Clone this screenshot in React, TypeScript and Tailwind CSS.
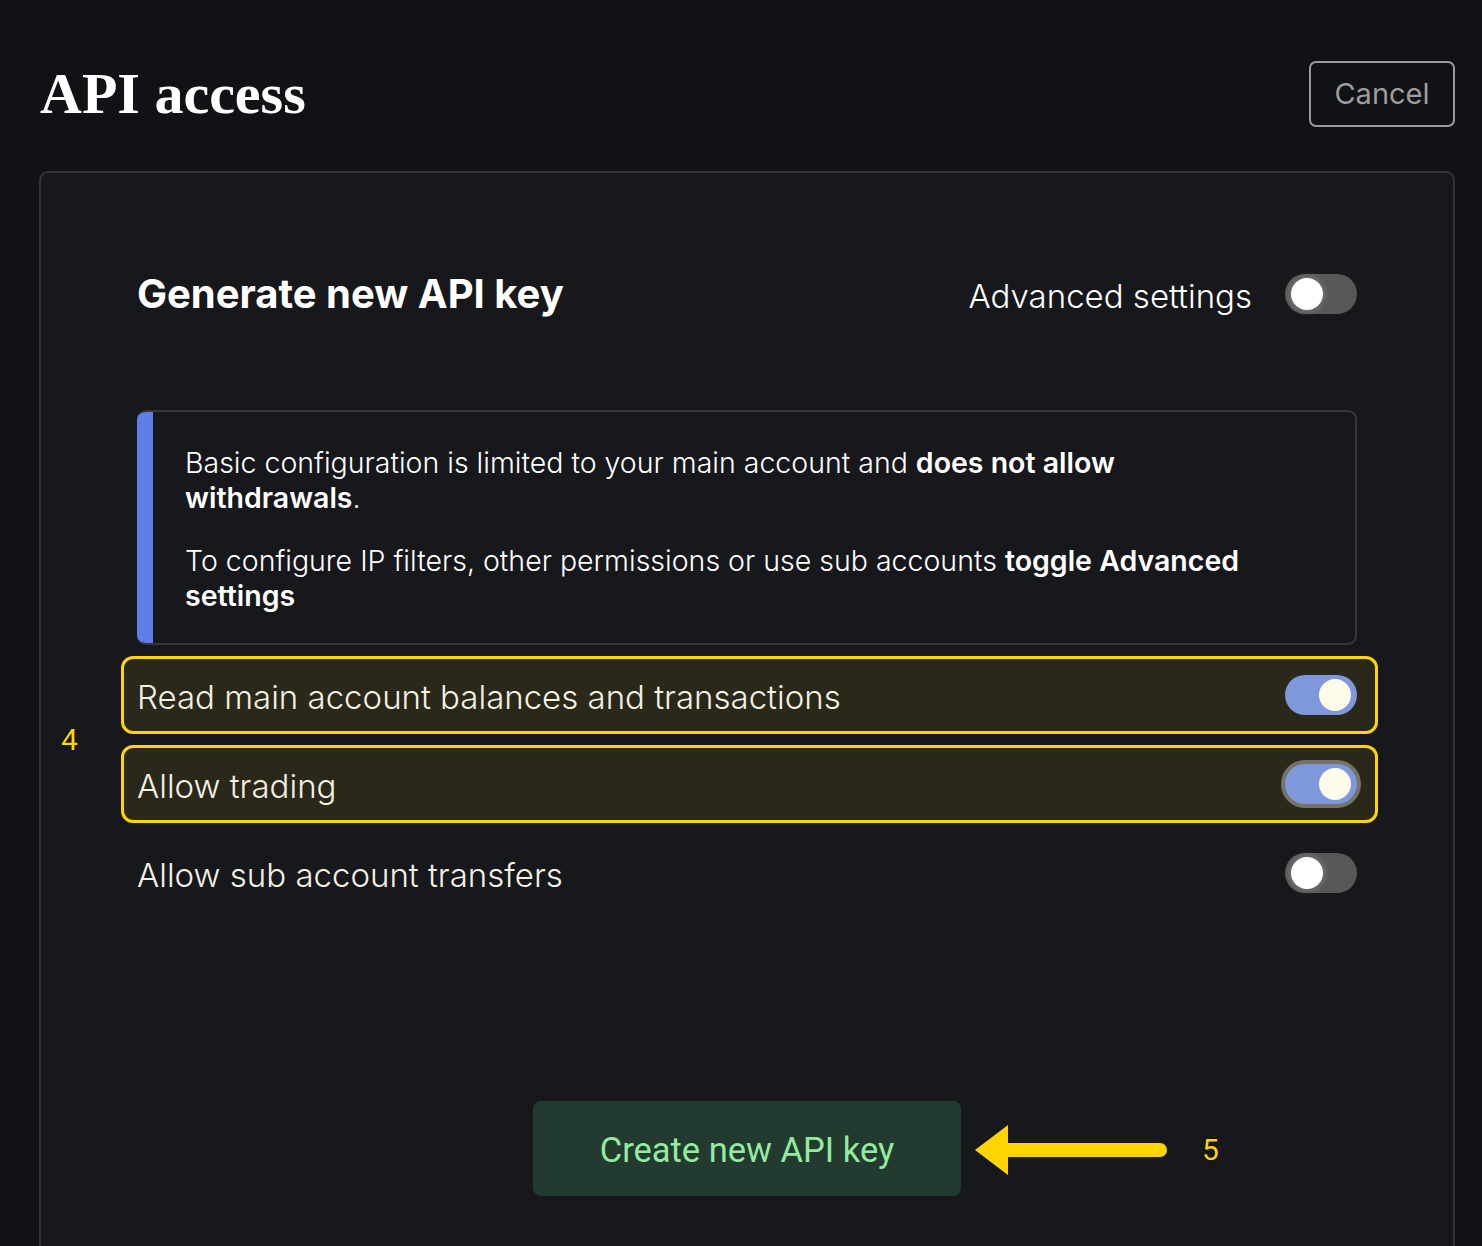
import React from "react";

function Toggle({ on, ring }: { on: boolean; ring?: boolean }) {
  return (
    <div
      className={
        "relative h-[40px] w-[72px] shrink-0 rounded-full " +
        (on ? "bg-[#7f98dc] " : "bg-[#575757] ") +
        (ring ? "shadow-[0_0_0_4px_#76736a]" : "")
      }
    >
      <div
        className={
          "absolute top-[4px] h-[32px] w-[32px] rounded-full " +
          (on
            ? "right-[6px] bg-[#fffbea]"
            : "left-[6px] bg-white shadow-[0_0_6px_2px_rgba(255,255,255,0.18)]")
        }
      />
    </div>
  );
}

function Row({
  label,
  on,
  highlight,
  ring,
}: {
  label: string;
  on: boolean;
  highlight?: boolean;
  ring?: boolean;
}) {
  return (
    <div
      className={
        "flex h-[78px] items-center justify-between rounded-[12px] border-[3px] pl-[13px] pr-[18px] " +
        (highlight ? "border-[#ffd500] bg-[#2a2819]" : "border-transparent")
      }
    >
      <span className="pt-[5px] text-[33px] font-light leading-none text-[#f4f1e4]">{label}</span>
      <Toggle on={on} ring={ring} />
    </div>
  );
}

export default function App() {
  return (
    <div
      className="relative h-[1246px] overflow-hidden bg-[#111215] pl-[39px] pr-[27px] pt-[61px]"
      style={{ fontFamily: "Inter, 'Noto Sans', sans-serif" }}
    >
      {/* Header */}
      <div className="flex h-[66px] items-center justify-between">
        <h1
          className="pl-[1px] text-[58px] font-bold leading-none text-white"
          style={{ fontFamily: "'Liberation Serif', 'DejaVu Serif', serif" }}
        >
          API access
        </h1>
        <button className="flex h-[66px] w-[146px] items-center justify-center rounded-[7px] border-2 border-[#9b9b9b] text-[29px] text-[#9d9d9d]">
          Cancel
        </button>
      </div>

      {/* Card */}
      <div className="mt-[44px] h-[1100px] rounded-[9px] border-2 border-[#333438] bg-[#17181c] px-[96px] pt-[101px]">
        <div className="flex h-[40px] items-center justify-between">
          <h2 className="text-[40px] font-bold leading-none text-white">Generate new API key</h2>
          <div className="flex items-center gap-[33px]">
            <span className="pt-[4px] text-[33px] font-light leading-none text-white">Advanced settings</span>
            <Toggle on={false} />
          </div>
        </div>

        {/* Info box */}
        <div className="mt-[96px] flex h-[235px] overflow-hidden rounded-[9px] border-2 border-l-0 border-[#36373b]">
          <div className="w-[16px] shrink-0 bg-[#5f7ee8]" />
          <div className="w-[1112px] pl-[32px] pt-[33px] text-[28.5px] font-light leading-[35px] text-white">
            <p>
              Basic configuration is limited to your main account and{" "}
              <b className="font-semibold">does not allow withdrawals</b>.
            </p>
            <p className="mt-[28px]">
              To configure IP filters, other permissions or use sub accounts{" "}
              <b className="font-semibold">toggle Advanced settings</b>
            </p>
          </div>
        </div>

        {/* Rows */}
        <div className="ml-[-16px] mr-[-21px] mt-[11px] flex flex-col gap-[11px]">
          <Row label="Read main account balances and transactions" on highlight />
          <Row label="Allow trading" on highlight ring />
          <Row label="Allow sub account transfers" on={false} />
        </div>

        {/* Button */}
        <div className="mt-[189px] flex justify-center">
          <button
            className="flex h-[95px] w-[428px] items-center justify-center rounded-[8px] bg-[#233a31] pt-[5px] text-[34.5px] text-[#93ec9e]"
            style={{ fontFamily: "Roboto, 'Noto Sans', sans-serif" }}
          >
            Create new API key
          </button>
        </div>
      </div>

      {/* Annotations */}
      <span
        className="absolute left-[61px] top-[725px] text-[30px] leading-none text-[#ffd500]"
        style={{ fontFamily: "Roboto, sans-serif", textShadow: "0 0 1px #000, 0 0 1px #000" }}
      >
        4
      </span>
      <svg
        className="absolute left-[972px] top-[1122px]"
        width="200"
        height="56"
        viewBox="0 0 200 56"
      >
        <path d="M3 28 L36 3 L36 53 Z" fill="#ffd500" />
        <line x1="30" y1="28" x2="188" y2="28" stroke="#ffd500" strokeWidth="14" strokeLinecap="round" />
      </svg>
      <span
        className="absolute left-[1202px] top-[1135px] text-[30px] leading-none text-[#ffd500]"
        style={{ fontFamily: "Roboto, sans-serif", textShadow: "0 0 1px #000, 0 0 1px #000" }}
      >
        5
      </span>
    </div>
  );
}
